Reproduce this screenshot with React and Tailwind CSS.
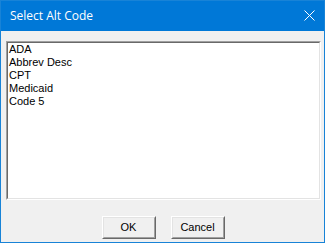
import React from 'react';

const items = ['ADA', 'Abbrev Desc', 'CPT', 'Medicaid', 'Code 5'];

function Button({ children }) {
  return (
    <button className="w-[54px] h-[23px] border border-t-white border-l-white border-r-[#696969] border-b-[#696969] bg-[#f0f0f0]">
      <div className="w-full h-full flex items-center justify-center border border-t-[#e3e3e3] border-l-[#e3e3e3] border-r-[#a0a0a0] border-b-[#a0a0a0] text-[11px] text-black">
        {children}
      </div>
    </button>
  );
}

export default function App() {
  return (
    <div className="w-[325px] h-[243px] flex flex-col border border-[#1883d7] bg-[#0078d7] font-['Liberation_Sans',sans-serif]">
      {/* Title bar */}
      <div className="h-[30px] shrink-0 flex items-center justify-between pl-[9px] pr-[9px] text-white">
        <span className="text-[12px] font-['Open_Sans',sans-serif] -mt-[1px]">Select Alt Code</span>
        <svg width="11" height="11" viewBox="0 0 11 11" className="-mt-[1px]">
          <path d="M0.5 0.5 L10.5 10.5 M10.5 0.5 L0.5 10.5" stroke="white" strokeWidth="1" fill="none" />
        </svg>
      </div>
      {/* Client area */}
      <div className="flex-1 bg-[#f0f0f0] flex flex-col pl-[5px] pt-[10px]">
        <div className="w-[315px] h-[159px] border border-t-[#a0a0a0] border-l-[#a0a0a0] border-r-white border-b-white">
          <div className="h-full border border-t-[#696969] border-l-[#696969] border-r-[#e3e3e3] border-b-[#e3e3e3] bg-white px-[1px]">
            {items.map((it) => (
              <div key={it} className="h-[13px] leading-[13px] text-[11px] text-black">{it}</div>
            ))}
          </div>
        </div>
        <div className="flex justify-center gap-[15px] mt-[16px] pr-[4px]">
          <Button>OK</Button>
          <Button>Cancel</Button>
        </div>
      </div>
    </div>
  );
}
